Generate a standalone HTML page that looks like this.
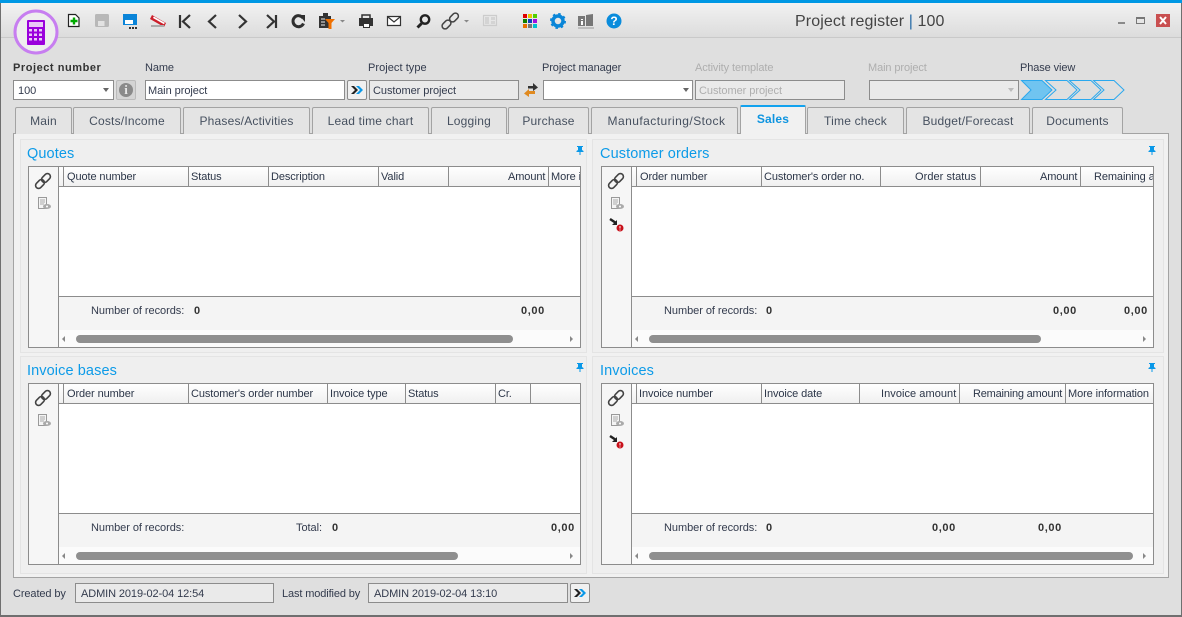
<!DOCTYPE html>
<html><head><meta charset="utf-8"><style>
html,body{margin:0;padding:0;width:1182px;height:617px;overflow:hidden}
body{position:relative;background:#dfdfdf;font:11px/13px "Liberation Sans",sans-serif;color:#2c3648}
div,span,svg{position:absolute;box-sizing:border-box}
.t{white-space:nowrap;letter-spacing:-.1px}
.lab{color:#333b4d;top:62px}
.box{height:20px;top:80px;border:1px solid #8c8c8c;background:#fff;padding:4px 2px;white-space:nowrap;color:#333b4d;letter-spacing:-.05px}
.ro{background:#eaeaea}
.tab{top:107px;height:27px;border:1px solid #a3a3a3;border-bottom:0;background:#e4e4e4;text-align:center;font-size:12px;line-height:26px;color:#46505f;border-radius:2px 2px 0 0;letter-spacing:.2px}
.panel{background:#efefef;border:1px solid #e4e4e4}
.title{font-size:14.5px;line-height:17px;color:#0d9be8;white-space:nowrap;letter-spacing:.1px}
.grid{background:#fff;border:1px solid #8c8c8c;overflow:hidden}
.side{left:0;top:0;bottom:0;width:30px;background:#f6f6f6;border-right:1px solid #8c8c8c}
.hd{left:30px;right:0;top:0;height:20px;background:linear-gradient(#fff,#f0f0f0);border-bottom:1px solid #8c8c8c}
.c{top:0;height:20px;border-left:1px solid #8c8c8c}
.h{top:4px;white-space:nowrap;color:#2c3648;letter-spacing:-.1px}
.foot{left:30px;right:0;height:34px;background:#f4f4f4;border-top:1px solid #8c8c8c}
.sb{left:30px;right:0;height:18px;background:#fbfbfb}
.th{height:8px;background:#8f8f8f;border-radius:4px;top:5px}
.a{width:0;height:0;border:3px solid transparent;top:6px}
.b{font-weight:bold;white-space:nowrap;color:#333;letter-spacing:.6px}
.f{white-space:nowrap;color:#333b4d;letter-spacing:-.05px}
</style></head><body>

<div style="left:0;top:0;width:1182px;height:37px;background:linear-gradient(#f4f4f4,#dcdcdc)"></div>
<div style="left:0;top:37px;width:1182px;height:1px;background:#c9c9c9"></div>
<div style="left:0;top:0;width:1182px;height:3px;background:#0098e4"></div>
<div style="left:0;top:3px;width:1px;height:614px;background:#6f6f6f"></div>
<div style="left:1181px;top:3px;width:1px;height:614px;background:#6f6f6f"></div>
<div style="left:0;top:615px;width:1182px;height:2px;background:#6f6f6f"></div>

<!-- logo -->
<svg style="left:13px;top:9px" width="46" height="46" viewBox="0 0 46 46">
<circle cx="23" cy="23" r="21" fill="#eee" stroke="#c77ef0" stroke-width="3"/>
<rect x="14" y="11" width="18" height="25" rx="1" fill="#9a00dc"/>
<rect x="16" y="13" width="14" height="5" fill="#e9c8f7"/>
<g fill="#e9c8f7"><rect x="16" y="20" width="3" height="2.5"/><rect x="21" y="20" width="3" height="2.5"/><rect x="26" y="20" width="3" height="2.5"/><rect x="16" y="24.500" width="3" height="2.500"/><rect x="21" y="24.500" width="3" height="2.500"/><rect x="26" y="24.500" width="3" height="2.500"/><rect x="16" y="29" width="3" height="2.500"/><rect x="21" y="29" width="3" height="2.500"/><rect x="26" y="29" width="3" height="2.500"/></g>
</svg>

<!-- toolbar icons -->
<svg style="left:60px;top:8px" width="590" height="26" viewBox="60 8 590 26">
<path d="M68.500 14.500h7l3.500 3.500v8.500H68.500z" fill="#fff" stroke="#222" stroke-width="1.200"/><path d="M74 17.500v7M70.500 21h7" stroke="#0a0" stroke-width="2.400"/>
<rect x="95" y="14" width="14" height="13" rx="1.500" fill="#b8b8b8"/><path d="M98 21h6.500v5H98z" fill="#e2e2e2"/>
<path d="M123 14h14v11h-14z" fill="#0a84d8"/><path d="M125 20h8v4h-8z" fill="#fff"/><path d="M129 27h2v2h-2zM132 27h2v2h-2zM135 27h2v2h-2z" fill="#333"/>
<path d="M152 15l14 8-2 4-14-8z" fill="#cc1f2a"/><path d="M153 18l11 6.300 .8-1.500-11-6.300z" fill="#fff"/><path d="M151 26h13" stroke="#aaa" stroke-width="2"/>
<path d="M180 15v13M190 15l-7 6.500 7 6.500" fill="none" stroke="#333" stroke-width="2.200"/>
<path d="M216 15l-7 6.500 7 6.500" fill="none" stroke="#333" stroke-width="2.200"/>
<path d="M239 15l7 6.500-7 6.500" fill="none" stroke="#333" stroke-width="2.200"/>
<path d="M267 15l7 6.500-7 6.500M276 15v13" fill="none" stroke="#333" stroke-width="2.200"/>
<path d="M303 18a5.500 5.500 0 1 0 .5 5.500" fill="none" stroke="#2f2f2f" stroke-width="3"/><path d="M299 15h6v7z" fill="#2f2f2f"/>
<path d="M319 16h12v12h-12z" fill="#333"/><path d="M323 13h5v3h-5z" fill="#333"/><path d="M321 19h4M321 22h4M321 25h4" stroke="#eee"/><path d="M325 19h10l-3.500 4v6h-3v-6z" fill="#f07000"/>
<path d="M340 20h5l-2.500 2.500z" fill="#888"/>
<path d="M359 18h14v8h-14z" fill="#333"/><path d="M362 15h8v4h-8z" fill="none" stroke="#333" stroke-width="1.500"/><path d="M363.500 23.500h6v4h-6z" fill="#fff" stroke="#333"/>
<path d="M387.500 16.500h13v9h-13z" fill="#fff" stroke="#333" stroke-width="1.200"/><path d="M388 17l6 5 6-5" fill="none" stroke="#333" stroke-width="1.200"/>
<circle cx="425" cy="19.500" r="4.200" fill="none" stroke="#222" stroke-width="2.400"/><path d="M421.500 23.500l-4 4" stroke="#222" stroke-width="3"/>
<g fill="none" stroke="#444" stroke-width="1.500"><rect x="449" y="14.500" width="10" height="6" rx="3" transform="rotate(-45 454 17.500)"/><rect x="441.500" y="21.500" width="10" height="6" rx="3" transform="rotate(-45 446.500 24.500)"/></g>
<path d="M464 20h5l-2.500 2.500z" fill="#888"/>
<path d="M483.500 15.500h13v10h-13z" fill="none" stroke="#ccc" stroke-width="1.200"/><path d="M485 17h4v7h-4zM491 17h4v3h-4zM491 21h4v3h-4z" fill="#d4d4d4"/>
<g><rect x="523" y="14" width="4" height="4" fill="#e00000"/><rect x="528" y="14" width="4" height="4" fill="#e6c800"/><rect x="533" y="14" width="4" height="4" fill="#50d000"/><rect x="523" y="19" width="4" height="4" fill="#108000"/><rect x="528" y="19" width="4" height="4" fill="#1040c0"/><rect x="533" y="19" width="4" height="4" fill="#a010e0"/><rect x="523" y="24" width="4" height="4" fill="#e87000"/><rect x="528" y="24" width="4" height="4" fill="#777"/><rect x="533" y="24" width="4" height="4" fill="#00c0d0"/></g>
<circle cx="558" cy="21" r="5" fill="none" stroke="#0a86d8" stroke-width="3.500"/><circle cx="558" cy="21" r="7" fill="none" stroke="#0a86d8" stroke-width="2" stroke-dasharray="2.500 3"/>
<path d="M578 16h7v10h-7zM586 15l7-1v12h-7z" fill="#777"/><path d="M578 28h16" stroke="#999"/><path d="M581 19h2v1h-2zM581 21h2v4h-2z" fill="#fff"/>
<circle cx="614" cy="21" r="7.500" fill="#0a8cdc"/>
</svg>
<div class="t" style="left:610px;top:15px;width:8px;text-align:center;color:#fff;font-weight:bold;font-size:12px">?</div>

<div class="t" style="left:795px;top:12px;font-size:16px;line-height:20px;color:#444;letter-spacing:.1px">Project register <span style="position:static;color:#2a6da8">|</span> 100</div>
<div style="left:1118px;top:22px;width:7px;height:2px;background:#8a8a8a"></div>
<div style="left:1136px;top:17px;width:9px;height:7px;border:1px solid #777;border-top-width:2px"></div>
<div style="left:1156px;top:14px;width:14px;height:13px;background:#c94f50"></div>
<svg style="left:1156px;top:14px" width="14" height="13"><path d="M4 3l6 7M10 3l-6 7" stroke="#fff" stroke-width="2"/></svg>

<!-- header fields -->
<div class="t" style="left:13px;top:62px;font-weight:bold;color:#333;letter-spacing:.55px">Project number</div>
<div class="t lab" style="left:145px">Name</div>
<div class="t lab" style="left:368px;letter-spacing:.05px">Project type</div>
<div class="t lab" style="left:542px">Project manager</div>
<div class="t lab" style="left:695px;color:#aeaeae">Activity template</div>
<div class="t lab" style="left:868px;color:#aeaeae">Main project</div>
<div class="t lab" style="left:1020px">Phase view</div>

<div class="box" style="left:13px;width:101px;padding-left:4px">100</div>
<div class="a" style="left:103px;top:88px;border-width:4px 3.5px 0;border-top-color:#666"></div>
<div style="left:116px;top:80px;width:20px;height:20px;background:#d4d4d4;border:1px solid #bbb;border-radius:2px"></div>
<div style="left:119px;top:83px;width:14px;height:14px;border-radius:7px;background:#8a8a8a;color:#e8e8e8;font:bold 13px/14px 'Liberation Serif',serif;text-align:center">i</div>
<div class="box" style="left:145px;width:200px">Main project</div>
<div style="left:347px;top:80px;width:20px;height:20px;background:#f0f0f0;border:1px solid #8c8c8c;border-radius:2px"></div>
<svg style="left:347px;top:80px" width="20" height="20"><path d="M4 6l4 4-4 4h3l4-4-4-4z" fill="#222"/><path d="M9 6l4 4-4 4h3l4-4-4-4z" fill="#0a98e8"/></svg>
<div class="box ro" style="left:369px;width:150px;padding-left:3px">Customer project</div>
<svg style="left:523px;top:81px" width="16" height="17"><path d="M5 5h5V2l5 4.500-5 3.500V7.500H5z" fill="#333"/><path d="M12 10H6V8l-5 4.500L6 16v-3h6z" fill="#e08a20"/></svg>
<div class="box" style="left:543px;width:150px"></div>
<div class="a" style="left:683px;top:88px;border-width:4px 3.5px 0;border-top-color:#666"></div>
<div class="box ro" style="left:695px;width:150px;color:#aeaeae;padding-left:3px">Customer project</div>
<div class="box ro" style="left:869px;width:150px"></div>
<div class="a" style="left:1008px;top:88px;border-width:4px 3.5px 0;border-top-color:#bbb"></div>
<svg style="left:1020px;top:80px" width="106" height="20"><path d="M1.500 .5H22L32 10 22 19.500H1.500L11 10z" fill="#70c4f0" stroke="#2aa8ee"/><path d="M25.500 .5H47L57 10 47 19.500H25.500L36 10zM49.500 .5H71L81 10 71 19.500H49.500L60 10zM73.500 .5H94L104 10 94 19.500H73.500L84 10z" fill="none" stroke="#2aa8ee"/></svg>

<!-- tab page -->
<div style="left:13px;top:133px;width:1156px;height:445px;background:#f1f1f1;border:1px solid #a3a3a3"></div>
<div class="tab" style="left:15px;width:57px">Main</div>
<div class="tab" style="left:73px;width:108px">Costs/Income</div>
<div class="tab" style="left:183px;width:127px">Phases/Activities</div>
<div class="tab" style="left:312px;width:117px">Lead time chart</div>
<div class="tab" style="left:431px;width:76px">Logging</div>
<div class="tab" style="left:508px;width:81px">Purchase</div>
<div class="tab" style="left:591px;width:147px;letter-spacing:.45px;padding-left:4px">Manufacturing/Stock</div>
<div class="tab" style="left:740px;top:105px;width:66px;height:29px;background:#f1f1f1;border-top:2px solid #12a2ee;border-bottom:0;color:#0d94e0;font-weight:bold;line-height:24px;z-index:2">Sales</div>
<div class="tab" style="left:807px;width:97px">Time check</div>
<div class="tab" style="left:906px;width:124px">Budget/Forecast</div>
<div class="tab" style="left:1032px;width:91px">Documents</div>

<!-- panels -->
<div class="panel" style="left:20px;top:139px;width:567px;height:214px"></div>
<div class="panel" style="left:592px;top:139px;width:572px;height:214px"></div>
<div class="panel" style="left:20px;top:356px;width:567px;height:218px"></div>
<div class="panel" style="left:592px;top:356px;width:572px;height:218px"></div>
<div class="title" style="left:27px;top:146px">Quotes</div>
<div class="title" style="left:600px;top:146px">Customer orders</div>
<div class="title" style="left:27px;top:363px">Invoice bases</div>
<div class="title" style="left:600px;top:363px">Invoices</div>
<svg style="left:576px;top:146px" width="8" height="9"><path d="M1 0h6v1H6v3l1.500 1v1H4.500v3h-1V6H.5V5L2 4V1H1z" fill="#0a98e8"/></svg>
<svg style="left:1148px;top:146px" width="8" height="9"><path d="M1 0h6v1H6v3l1.500 1v1H4.500v3h-1V6H.5V5L2 4V1H1z" fill="#0a98e8"/></svg>
<svg style="left:576px;top:363px" width="8" height="9"><path d="M1 0h6v1H6v3l1.500 1v1H4.500v3h-1V6H.5V5L2 4V1H1z" fill="#0a98e8"/></svg>
<svg style="left:1148px;top:363px" width="8" height="9"><path d="M1 0h6v1H6v3l1.500 1v1H4.500v3h-1V6H.5V5L2 4V1H1z" fill="#0a98e8"/></svg>

<div class="grid" style="left:28px;top:166px;width:553px;height:182px">
 <div class="side"></div>
 <svg style="left:5px;top:5px" width="18" height="18"><g fill="none" stroke="#444" stroke-width="1.600"><rect x="7" y="3" width="10" height="6" rx="3" transform="rotate(-45 12 6)"/><rect x="1" y="9" width="10" height="6" rx="3" transform="rotate(-45 6 12)"/></g></svg>
 <svg style="left:8px;top:30px" width="16" height="14"><path d="M1.500.5h8v11h-8z" fill="#f4f4f4" stroke="#999"/><path d="M3 3h5M3 5h5M3 7h4" stroke="#aaa"/><ellipse cx="10" cy="9.500" rx="4" ry="2.500" fill="#aaa"/><circle cx="10" cy="9.500" r="1" fill="#fff"/></svg>
 <div class="hd"><div class="c" style="left:4px"></div><div class="c" style="left:129px"></div><div class="c" style="left:209px"></div><div class="c" style="left:319px"></div><div class="c" style="left:389px"></div><div class="c" style="left:489px"></div></div>
 <div class="h" style="left:38px">Quote number</div><div class="h" style="left:162px">Status</div><div class="h" style="left:242px">Description</div><div class="h" style="left:352px">Valid</div><div class="h" style="left:479px">Amount</div><div class="h" style="left:522px">More i</div>
 <div class="foot" style="top:129px"></div><div class="sb" style="top:163px"><div class="th" style="left:17px;width:437px"></div></div>
 <div class="a" style="left:33px;top:169px;border-right-color:#888;border-left-width:0"></div><div class="a" style="left:541px;top:169px;border-left-color:#888;border-right-width:0"></div>
 <div class="f" style="left:62px;top:138px">Number of records:</div><div class="b" style="left:165px;top:138px">0</div><div class="b" style="left:492px;top:138px">0,00</div>
</div>

<div class="grid" style="left:601px;top:166px;width:553px;height:182px">
 <div class="side"></div>
 <svg style="left:5px;top:5px" width="18" height="18"><g fill="none" stroke="#444" stroke-width="1.600"><rect x="7" y="3" width="10" height="6" rx="3" transform="rotate(-45 12 6)"/><rect x="1" y="9" width="10" height="6" rx="3" transform="rotate(-45 6 12)"/></g></svg>
 <svg style="left:8px;top:30px" width="16" height="14"><path d="M1.500.5h8v11h-8z" fill="#f4f4f4" stroke="#999"/><path d="M3 3h5M3 5h5M3 7h4" stroke="#aaa"/><ellipse cx="10" cy="9.500" rx="4" ry="2.500" fill="#aaa"/><circle cx="10" cy="9.500" r="1" fill="#fff"/></svg>
 <svg style="left:7px;top:50px" width="16" height="16"><path d="M1 2l6 4" stroke="#222" stroke-width="2.500"/><path d="M8 3v5H3z" fill="#222"/><circle cx="11" cy="11" r="3.500" fill="#c8101a"/><path d="M11 9v2.500M11 12.500v1" stroke="#fff"/></svg>
 <div class="hd"><div class="c" style="left:4px"></div><div class="c" style="left:129px"></div><div class="c" style="left:248px"></div><div class="c" style="left:348px"></div><div class="c" style="left:448px"></div></div>
 <div class="h" style="left:38px">Order number</div><div class="h" style="left:162px">Customer's order no.</div><div class="h" style="left:313px;letter-spacing:.05px">Order status</div><div class="h" style="left:438px">Amount</div><div class="h" style="left:492px">Remaining a</div>
 <div class="foot" style="top:129px"></div><div class="sb" style="top:163px"><div class="th" style="left:17px;width:392px"></div></div>
 <div class="a" style="left:33px;top:169px;border-right-color:#888;border-left-width:0"></div><div class="a" style="left:541px;top:169px;border-left-color:#888;border-right-width:0"></div>
 <div class="f" style="left:62px;top:138px">Number of records:</div><div class="b" style="left:164px;top:138px">0</div><div class="b" style="left:451px;top:138px">0,00</div><div class="b" style="left:522px;top:138px">0,00</div>
</div>

<div class="grid" style="left:28px;top:383px;width:553px;height:182px">
 <div class="side"></div>
 <svg style="left:5px;top:5px" width="18" height="18"><g fill="none" stroke="#444" stroke-width="1.600"><rect x="7" y="3" width="10" height="6" rx="3" transform="rotate(-45 12 6)"/><rect x="1" y="9" width="10" height="6" rx="3" transform="rotate(-45 6 12)"/></g></svg>
 <svg style="left:8px;top:30px" width="16" height="14"><path d="M1.500.5h8v11h-8z" fill="#f4f4f4" stroke="#999"/><path d="M3 3h5M3 5h5M3 7h4" stroke="#aaa"/><ellipse cx="10" cy="9.500" rx="4" ry="2.500" fill="#aaa"/><circle cx="10" cy="9.500" r="1" fill="#fff"/></svg>
 <div class="hd"><div class="c" style="left:4px"></div><div class="c" style="left:129px"></div><div class="c" style="left:268px"></div><div class="c" style="left:346px"></div><div class="c" style="left:436px"></div><div class="c" style="left:471px"></div></div>
 <div class="h" style="left:38px">Order number</div><div class="h" style="left:162px">Customer's order number</div><div class="h" style="left:301px">Invoice type</div><div class="h" style="left:379px">Status</div><div class="h" style="left:469px">Cr.</div>
 <div class="foot" style="top:129px"></div><div class="sb" style="top:163px"><div class="th" style="left:17px;width:382px"></div></div>
 <div class="a" style="left:33px;top:169px;border-right-color:#888;border-left-width:0"></div><div class="a" style="left:541px;top:169px;border-left-color:#888;border-right-width:0"></div>
 <div class="f" style="left:62px;top:138px">Number of records:</div><div class="f" style="left:267px;top:138px">Total:</div><div class="b" style="left:303px;top:138px">0</div><div class="b" style="left:522px;top:138px">0,00</div>
</div>

<div class="grid" style="left:601px;top:383px;width:553px;height:182px">
 <div class="side"></div>
 <svg style="left:5px;top:5px" width="18" height="18"><g fill="none" stroke="#444" stroke-width="1.600"><rect x="7" y="3" width="10" height="6" rx="3" transform="rotate(-45 12 6)"/><rect x="1" y="9" width="10" height="6" rx="3" transform="rotate(-45 6 12)"/></g></svg>
 <svg style="left:8px;top:30px" width="16" height="14"><path d="M1.500.5h8v11h-8z" fill="#f4f4f4" stroke="#999"/><path d="M3 3h5M3 5h5M3 7h4" stroke="#aaa"/><ellipse cx="10" cy="9.500" rx="4" ry="2.500" fill="#aaa"/><circle cx="10" cy="9.500" r="1" fill="#fff"/></svg>
 <svg style="left:7px;top:50px" width="16" height="16"><path d="M1 2l6 4" stroke="#222" stroke-width="2.500"/><path d="M8 3v5H3z" fill="#222"/><circle cx="11" cy="11" r="3.500" fill="#c8101a"/><path d="M11 9v2.500M11 12.500v1" stroke="#fff"/></svg>
 <div class="hd"><div class="c" style="left:4px"></div><div class="c" style="left:129px"></div><div class="c" style="left:227px"></div><div class="c" style="left:327px"></div><div class="c" style="left:433px"></div></div>
 <div class="h" style="left:37px">Invoice number</div><div class="h" style="left:162px">Invoice date</div><div class="h" style="left:279px;letter-spacing:.05px">Invoice amount</div><div class="h" style="left:371px;letter-spacing:-.2px">Remaining amount</div><div class="h" style="left:466px">More information</div>
 <div class="foot" style="top:129px"></div><div class="sb" style="top:163px"><div class="th" style="left:17px;width:484px"></div></div>
 <div class="a" style="left:33px;top:169px;border-right-color:#888;border-left-width:0"></div><div class="a" style="left:541px;top:169px;border-left-color:#888;border-right-width:0"></div>
 <div class="f" style="left:62px;top:138px">Number of records:</div><div class="b" style="left:164px;top:138px">0</div><div class="b" style="left:330px;top:138px">0,00</div><div class="b" style="left:436px;top:138px">0,00</div>
</div>

<!-- bottom -->
<div class="t lab" style="left:13px;top:588px;letter-spacing:-.1px">Created by</div>
<div class="box ro" style="left:75px;top:583px;width:199px;padding-left:5px;letter-spacing:-.1px">ADMIN 2019-02-04 12:54</div>
<div class="t lab" style="left:282px;top:588px;letter-spacing:-.12px">Last modified by</div>
<div class="box ro" style="left:368px;top:583px;width:200px;padding-left:5px;letter-spacing:-.1px">ADMIN 2019-02-04 13:10</div>
<div style="left:570px;top:583px;width:20px;height:20px;background:#f0f0f0;border:1px solid #8c8c8c;border-radius:2px"></div>
<svg style="left:570px;top:583px" width="20" height="20"><path d="M4 6l4 4-4 4h3l4-4-4-4z" fill="#222"/><path d="M9 6l4 4-4 4h3l4-4-4-4z" fill="#0a98e8"/></svg>
</body></html>
